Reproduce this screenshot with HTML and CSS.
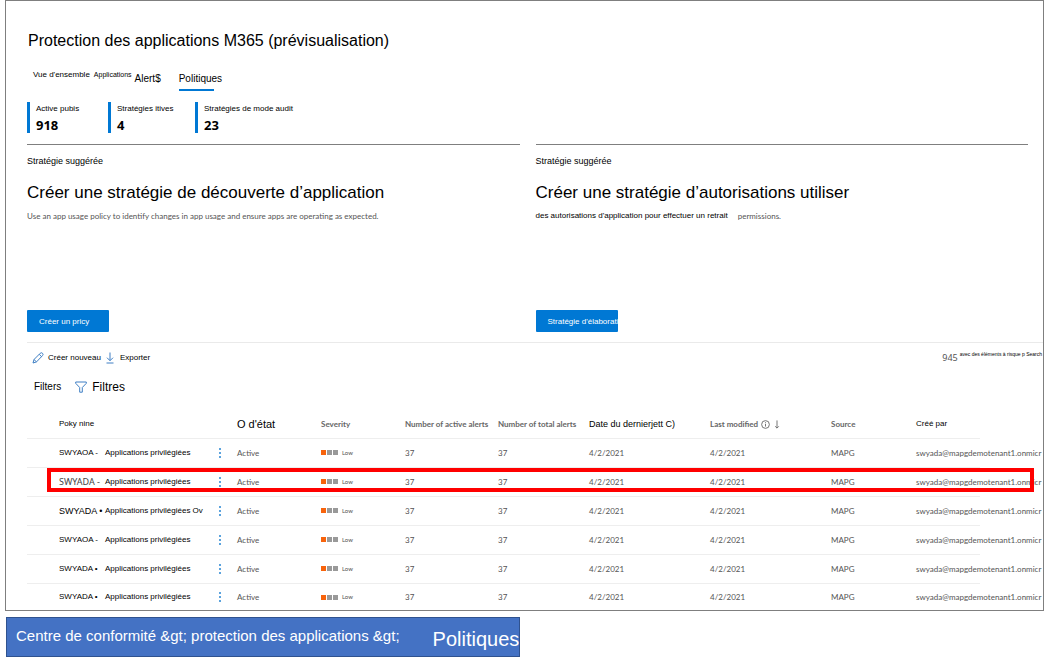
FILE: index.html
```html
<!DOCTYPE html>
<html lang="fr">
<head>
<meta charset="utf-8">
<title>Protection des applications M365</title>
<link rel="stylesheet" href="styles.css">
</head>
<body>
<main class="panel">
  <h1 class="title">Protection des applications M365 (prévisualisation)</h1>
  <nav class="tabs">
    <a class="tab tab-small" href="#">Vue d'ensemble</a>
    <a class="tab tab-tiny" href="#">Applications</a>
    <a class="tab" href="#">Alert$</a>
    <a class="tab tab-active" href="#">Politiques</a>
  </nav>
  <section class="stats">
    <div class="stat"><span class="stat-label">Active pubis</span><strong class="stat-value">918</strong></div>
    <div class="stat"><span class="stat-label">Stratégies itives</span><strong class="stat-value">4</strong></div>
    <div class="stat"><span class="stat-label">Stratégies de mode audit</span><strong class="stat-value">23</strong></div>
  </section>
  <section class="cards">
    <article class="card">
      <p class="card-label">Stratégie suggérée</p>
      <h2 class="card-title">Créer une stratégie de découverte d’application</h2>
      <p class="card-text">Use an app usage policy to identify changes in app usage and ensure apps are operating as expected.</p>
      <button class="primary" type="button">Créer un pricy</button>
    </article>
    <article class="card">
      <p class="card-label">Stratégie suggérée</p>
      <h2 class="card-title">Créer une stratégie d’autorisations utiliser</h2>
      <p class="card-text"><span class="card-strong">des autorisations d'application pour effectuer un retrait</span>permissions.</p>
      <button class="primary" type="button">Stratégie d'élaborati</button>
    </article>
  </section>
  <div class="toolbar">
    <button class="command" type="button"><svg class="icon" viewBox="0 0 12 12"><path d="M1 11l1-3.500L8.200 1.300a1.400 1.400 0 0 1 2.300 2.300L4.500 9.900zM7.200 2.300l2.400 2.400M2 7.500l2.500 2.400"/></svg>Créer nouveau</button>
    <button class="command" type="button"><svg class="icon" viewBox="0 0 12 12"><path d="M6 0.500v8M3 5.700l3 3 3-3M2.500 11h7"/></svg>Exporter</button>
    <p class="count"><span class="count-value">945</span><span class="count-note">avec des éléments à risque p Search</span></p>
  </div>
  <div class="filters">
    <span class="filters-label">Filters</span>
    <button class="filter-button" type="button"><svg class="icon" viewBox="0 0 12 12"><path d="M0.700 1h10.600v1.300L7.300 6.500v4.700H4.700V6.500L0.700 2.300z"/></svg>Filtres</button>
  </div>
  <table class="policies">
    <colgroup><col class="c-name"><col class="c-menu"><col class="c-status"><col class="c-severity"><col class="c-active"><col class="c-total"><col class="c-date"><col class="c-modified"><col class="c-source"><col></colgroup>
    <thead>
      <tr>
        <th class="name fr-small">Poky nine</th><th></th><th class="fr-large">O d'état</th><th>Severity</th><th>Number of active alerts</th><th>Number of total alerts</th><th class="fr-medium">Date du dernierjett C)</th>
        <th><span class="sort">Last modified <svg class="info" viewBox="0 0 10 10"><circle cx="5" cy="5" r="4.300"/><path d="M5 4.300v3M5 2.500v1"/></svg><svg class="arrow" viewBox="0 0 6 10"><path d="M3 0.500v8.500M1 7l2 2 2-2"/></svg></span></th>
        <th>Source</th><th class="fr-small">Créé par</th>
      </tr>
    </thead>
    <tbody>
      <tr><td class="name"><span class="pair"><span class="code">SWYAOA -</span><span>Applications privilégiées</span></span></td><td><button class="more" type="button" aria-label="Plus"></button></td><td>Active</td><td><span class="level"><i class="on"></i><i></i><i></i>Low</span></td><td>37</td><td>37</td><td>4/2/2021</td><td>4/2/2021</td><td>MAPG</td><td>swyada@mapgdemotenant1.onmicr</td></tr>
      <tr class="highlight"><td class="name"><span class="pair"><span class="code code-grey">SWYADA -</span><span>Applications privilégiées</span></span></td><td><button class="more" type="button" aria-label="Plus"></button></td><td>Active</td><td><span class="level"><i class="on"></i><i></i><i></i>Low</span></td><td>37</td><td>37</td><td>4/2/2021</td><td>4/2/2021</td><td>MAPG</td><td>swyada@mapgdemotenant1.onmicr</td></tr>
      <tr><td class="name"><span class="pair"><span class="code code-large">SWYADA •</span><span>Applications privilégiées Ov</span></span></td><td><button class="more" type="button" aria-label="Plus"></button></td><td>Active</td><td><span class="level"><i class="on"></i><i></i><i></i>Low</span></td><td>37</td><td>37</td><td>4/2/2021</td><td>4/2/2021</td><td>MAPG</td><td>swyada@mapgdemotenant1.onmicr</td></tr>
      <tr><td class="name"><span class="pair"><span class="code">SWYAOA -</span><span>Applications privilégiées</span></span></td><td><button class="more" type="button" aria-label="Plus"></button></td><td>Active</td><td><span class="level"><i class="on"></i><i></i><i></i>Low</span></td><td>37</td><td>37</td><td>4/2/2021</td><td>4/2/2021</td><td>MAPG</td><td>swyada@mapgdemotenant1.onmicr</td></tr>
      <tr><td class="name"><span class="pair"><span class="code">SWYADA •</span><span>Applications privilégiées</span></span></td><td><button class="more" type="button" aria-label="Plus"></button></td><td>Active</td><td><span class="level"><i class="on"></i><i></i><i></i>Low</span></td><td>37</td><td>37</td><td>4/2/2021</td><td>4/2/2021</td><td>MAPG</td><td>swyada@mapgdemotenant1.onmicr</td></tr>
      <tr><td class="name"><span class="pair"><span class="code">SWYADA •</span><span>Applications privilégiées</span></span></td><td><button class="more" type="button" aria-label="Plus"></button></td><td>Active</td><td><span class="level"><i class="on"></i><i></i><i></i>Low</span></td><td>37</td><td>37</td><td>4/2/2021</td><td>4/2/2021</td><td>MAPG</td><td>swyada@mapgdemotenant1.onmicr</td></tr>
    </tbody>
  </table>
</main>
<footer class="breadcrumb">
  <span>Centre de conformité &amp;gt; protection des applications &amp;gt;</span>
  <span class="crumb-current">Politiques</span>
</footer>
</body>
</html>
```
FILE: styles.css
```css
* { box-sizing: border-box; }
body {
  margin: 0;
  background: #fff;
  color: #000;
  font-family: "Liberation Sans", Arial, sans-serif;
  font-size: 9px;
  overflow: hidden;
}
h1, h2, p { margin: 0; font-weight: 400; }
button { font: inherit; color: inherit; background: none; border: 0; padding: 0; }
svg { fill: none; stroke: currentColor; }

.panel {
  margin: 0 0 0 5px;
  border: 1px solid #7f7f7f;
  padding: 30px 0 0 21px;
  overflow: hidden;
}
.title { font-size: 16px; line-height: 20px; padding-left: 1px; }

.tabs { display: flex; align-items: flex-start; margin: 17px 0 0 6px; height: 23px; }
.tab { color: inherit; text-decoration: none; font-size: 10px; line-height: 22px; margin-right: 18px; }
.tab-small { font-size: 8px; line-height: 13px; margin-right: 4px; }
.tab-tiny { font-size: 7px; line-height: 13px; margin-right: 3px; }
.tab-active { position: relative; margin: 0; }
.tab-active::after {
  content: "";
  position: absolute;
  left: 0;
  right: 8px;
  bottom: -1px;
  height: 2px;
  background: #0078d4;
}

.stats { display: grid; grid-template-columns: 81px 87px auto; margin-top: 11px; }
.stat {
  display: flex;
  flex-direction: column;
  border-left: 3px solid #0078d4;
  padding-left: 6px;
  height: 31px;
}
.stat-label { font-size: 8px; line-height: 13px; }
.stat-value { font: 700 13px/20px "Noto Sans", sans-serif; }

.cards { display: grid; grid-template-columns: 1fr 1fr; gap: 16px; margin: 11px 15px 0 0; }
.card {
  display: flex;
  flex-direction: column;
  align-items: flex-start;
  border-top: 1px solid #7f7f7f;
  padding-top: 9px;
  height: 188px;
}
.card-label { font-size: 9px; line-height: 14px; }
.card-title { font-size: 17px; line-height: 20px; margin-top: 15px; }
.card-text {
  display: flex;
  gap: 10px;
  margin-top: 6px;
  font: 8px/14px Lato, sans-serif;
  color: #555;
}
.card-strong { font-family: "Liberation Sans", Arial, sans-serif; color: #000; }
.primary {
  width: 82px;
  height: 22px;
  margin-top: auto;
  padding-left: 12px;
  border-radius: 1px;
  background: #0078d4;
  color: #fff;
  font-size: 8px;
  text-align: left;
  white-space: nowrap;
  overflow: hidden;
}

.toolbar {
  display: flex;
  align-items: center;
  height: 30px;
  margin-top: 10px;
  padding: 0 1px 0 5px;
  border-top: 1px solid #eaeaea;
}
.command { display: flex; align-items: center; gap: 4px; font-size: 8px; margin-right: 3px; }
.icon { width: 12px; height: 12px; color: #3f7fc4; flex: none; }
.count { display: flex; margin-left: auto; gap: 2px; }
.count-value { font: 9px/14px "Noto Sans", sans-serif; color: #555; }
.count-note { font-size: 5px; line-height: 7px; }

.filters { display: flex; align-items: center; height: 29px; padding-left: 7px; gap: 14px; }
.filters-label { font-size: 10px; }
.filter-button { display: flex; align-items: center; gap: 5px; font-size: 12px; }

.policies {
  width: 100%;
  margin-top: 9px;
  table-layout: fixed;
  border-collapse: separate;
  border-spacing: 0;
  font: 8px/12px Lato, sans-serif;
  color: #555;
}
.policies th, .policies td {
  height: 29px;
  padding: 0 0 1px;
  border-bottom: 1px solid #eee;
  text-align: left;
  vertical-align: middle;
  white-space: nowrap;
}
.policies th { padding: 0; font-weight: 700; color: #666; }
.policies tbody tr:last-child td { height: 26px; padding: 0; border-bottom: 0; }
.c-name { width: 190px; }
.c-menu { width: 20px; }
.c-status, .c-severity { width: 84px; }
.c-active { width: 93px; }
.c-total { width: 91px; }
.c-date, .c-modified { width: 121px; }
.c-source { width: 85px; }
.policies tr .name, .policies tbody tr:last-child .name { padding-left: 32px; }
.policies .name, .policies .fr-small, .policies .fr-medium, .policies .fr-large {
  font-family: "Liberation Sans", Arial, sans-serif;
  font-weight: 400;
  color: #000;
}
.policies .fr-medium { font-size: 9px; }
.policies .fr-large { font-size: 11px; }
.pair { display: flex; align-items: center; }
.code { width: 46px; }
.code-grey { font-family: "Noto Sans", sans-serif; font-size: 9px; color: #444; }
.code-large { font-size: 9px; }
.more {
  display: block;
  width: 2px;
  height: 10px;
  margin-left: 2px;
  background: repeating-linear-gradient(#5ba3dd 0 2px, transparent 2px 4px);
}
.level { display: flex; align-items: center; gap: 1px; font-size: 6px; }
.level i { width: 5px; height: 5px; background: #999; }
.level i.on { background: #f7630c; }
.level i:last-of-type { margin-right: 3px; }
.sort { display: flex; align-items: center; gap: 3px; }
.info { width: 9px; height: 9px; }
.arrow { width: 6px; height: 9px; margin-left: 1px; }
.highlight { position: relative; }
.highlight::after {
  content: "";
  position: absolute;
  inset: 0 9px 5px 20px;
  border: 4px solid #f00;
}

.breadcrumb {
  display: flex;
  width: calc(50% - 8px);
  height: 40px;
  margin: 6px 0 0 6px;
  padding: 0 0 0 9px;
  gap: 33px;
  border: 1px solid #2f528f;
  background: #4472c4;
  color: #fff;
  font-size: 15px;
  line-height: 36px;
  white-space: nowrap;
  overflow: hidden;
}
.crumb-current { font-size: 20px; line-height: 42px; }
```
